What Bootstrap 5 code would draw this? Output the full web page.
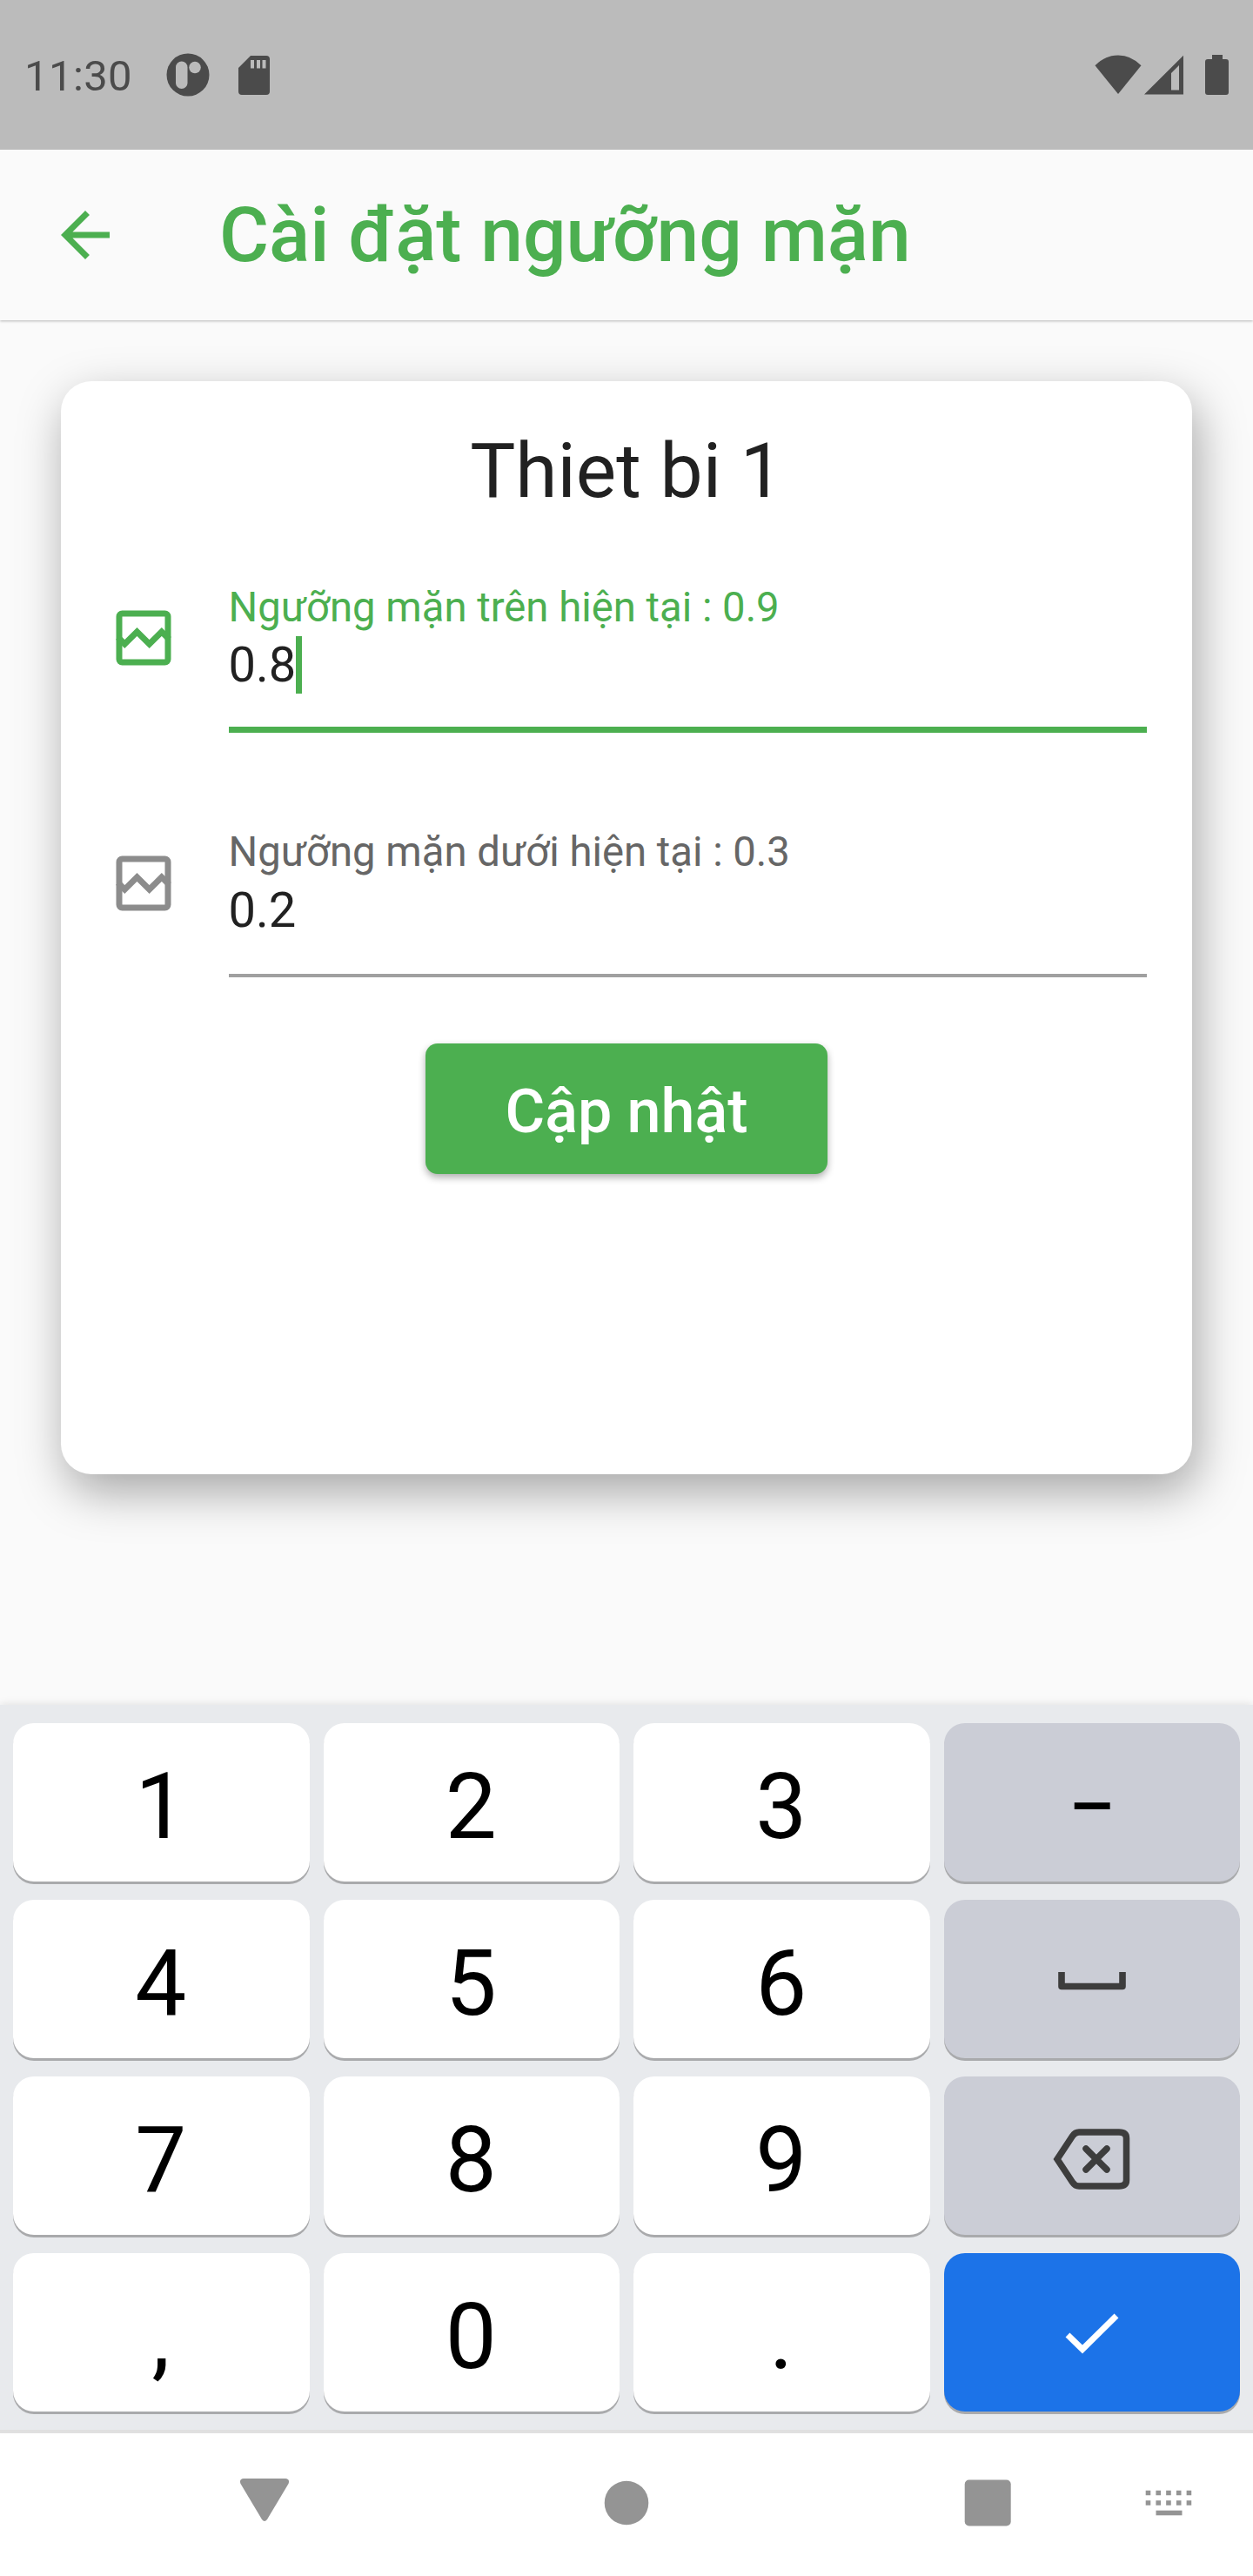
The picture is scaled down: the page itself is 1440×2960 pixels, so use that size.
<!DOCTYPE html>
<html lang="vi">
<head>
<meta charset="utf-8">
<meta name="viewport" content="width=device-width, initial-scale=1">
<title>Cài đặt ngưỡng mặn</title>
<link href="https://cdn.jsdelivr.net/npm/bootstrap@5.3.0/dist/css/bootstrap.min.css" rel="stylesheet">
<style>
  :root { --leaf: #4caf50; --ink: #212121; }
  body { font-family: Roboto, "Noto Sans", sans-serif; background: #fafafa; color: var(--ink); }
  svg { display: block; flex: none; }
  .phone { width: 1440px; height: 2960px; overflow: hidden; }

  .status-bar { height: 172px; background: #bbb; color: #4b4b4b; padding: 4px 28px 0 28px; z-index: 1; }
  .status-bar svg { margin-top: -4px; }
  .clock { font-size: 49px; line-height: 58px; letter-spacing: .4px; width: 163px; }
  .icon-sd { margin-left: 33px; }
  .icon-signal { margin-left: 3px; }
  .icon-battery { margin-left: 25px; }

  .app-bar { height: 196px; padding: 0 56px; background: #fafafa; box-shadow: 0 1px 3px rgba(0,0,0,.27); }
  .app-title { font-size: 87.5px; line-height: 104px; font-weight: 500; color: var(--leaf); margin-left: 112px; }

  .content-area { height: 1591px; padding: 70px 70px 0; }
  .device-card { height: 1256px; border: 0; border-radius: 35px; background: #fff; padding: 51px 52px 0 52px;
    box-shadow: 6px 20px 54px rgba(0,0,0,.34); }
  .device-name { font-size: 87.5px; line-height: 104px; font-weight: 400; margin-bottom: 42px; }

  .field-row { height: 282px; }
  .field-icon { margin: 0 56px 0 .5px; padding-top: 56px; }
  .field-box { height: 172px; border-bottom: 4px solid #a0a0a0; margin-top: 34px; }
  .field-box.is-active { border-bottom: 7px solid var(--leaf); height: 172.5px; margin-top: 34.5px; }
  .field-label { font-size: 47.25px; line-height: 56px; color: #666; }
  .field-value { font-size: 56px; line-height: 66px; margin-top: 5.5px; }
  .is-active .field-label { color: var(--leaf); }
  .caret { width: 7px; height: 66px; background: var(--leaf); }
  .tint-on { color: var(--leaf); } .tint-off { color: #8c8c8c; }

  .btn-update { width: 462px; height: 150px; border: 0; border-radius: 14px; background: var(--leaf); color: #fff;
    font-size: 70px; font-weight: 500; line-height: 82px; padding: 6px 0 0; box-shadow: 0 4px 9px rgba(0,0,0,.32); }

  .keyboard { position: relative; height: 837px; background: #e8eaed; padding: 21px 15px 0; border-bottom: 4px solid #e0e0e0;
    box-shadow: 0 0 10px rgba(0,0,0,.12); }
  .key-grid { display: grid; grid-template-columns: repeat(4, 1fr); grid-auto-rows: 182px; gap: 21px 16px; }
  .key { border: 0; border-radius: 24px; background: #fff; color: #000; font-size: 105px; line-height: 123px; padding: 10px 1px 0 0;
    box-shadow: 0 3px 0 #a9aaac; display: flex; align-items: center; justify-content: center; }
  .key-fn { background: #cbcdd6; color: #3d3d3d; padding: 4px 0 0; }
  .key-dash { color: #000; font-size: 82px; font-weight: 500; padding-top: 10px; }
  .key-erase { padding: 7px 2px 0 0; }
  .key-go { background: #1c73e8; color: #fff; padding: 2px 0 0; }

  .nav-keys { height: 164px; background: #fff; color: #949494; padding-left: 276px; }
  .nav-keys svg { width: 56px; height: 60px; }
  .nav-home { margin-left: 360px; }
  .nav-recent { margin-left: 359px; }
  .nav-ime { margin-left: 152px; }
</style>
</head>
<body>
<div class="phone d-flex flex-column">

  <header class="status-bar position-relative d-flex align-items-center">
    <span class="clock">11:30</span>
    <svg width="50" height="50" viewBox="0 0 50 50"><circle cx="25" cy="25" r="24.5" fill="currentColor"/><rect x="11" y="9.5" width="13.5" height="31.5" rx="6.75" fill="#bbb"/><circle cx="33" cy="16.5" r="6.8" fill="#bbb"/></svg>
    <svg class="icon-sd" width="36" height="45" viewBox="0 0 36 45"><path fill="currentColor" fill-rule="evenodd" d="M14 0H32Q36 0 36 4V41Q36 45 32 45H4Q0 45 0 41V14ZM14 5V14.5H18V5ZM21 5V14.5H25V5ZM27.5 5V14.5H31.5V5Z"/></svg>
    <svg class="ms-auto" width="54" height="46" viewBox="0 0 54 46"><path fill="currentColor" d="M.5 12.3Q12 .5 27 .5T53.5 12.3L27 45Z"/></svg>
    <svg class="icon-signal" width="45" height="46" viewBox="0 0 45 46"><path fill="currentColor" fill-rule="evenodd" d="M0 45.5L45 .8V45.5ZM31 21V40.5H40V12Z"/></svg>
    <svg class="icon-battery" width="27" height="46" viewBox="0 0 27 46"><path fill="currentColor" d="M8 0H20V5H24Q27 5 27 8V43Q27 46 24 46H3Q0 46 0 43V8Q0 5 3 5H8Z"/></svg>
  </header>

  <nav class="app-bar d-flex align-items-center">
    <svg width="84" height="84" viewBox="0 0 24 24" fill="#4caf50"><path d="M20 11H7.83l5.59-5.59L12 4l-8 8 8 8 1.41-1.41L7.83 13H20v-2z"/></svg>
    <h1 class="app-title mb-0">Cài đặt ngưỡng mặn</h1>
  </nav>

  <main class="content-area">
    <section class="card device-card">
      <h2 class="device-name text-center">Thiet bi 1</h2>

      <div class="field-row d-flex">
        <svg class="field-icon tint-on" width="84" height="140" viewBox="0 0 24 24" fill="none" stroke="currentColor" stroke-width="2"><rect x="4" y="4" width="16" height="16" rx="1"/><path d="M3.6 11.8L5.8 14l4.05-4 4.05 4 4.05-4L20.4 12.4"/></svg>
        <div class="field-box is-active flex-grow-1">
          <div class="field-label">Ngưỡng mặn trên hiện tại : 0.9</div>
          <div class="field-value d-flex align-items-center">0.8<span class="caret"></span></div>
        </div>
      </div>

      <div class="field-row d-flex">
        <svg class="field-icon tint-off" width="84" height="140" viewBox="0 0 24 24" fill="none" stroke="currentColor" stroke-width="2"><rect x="4" y="4" width="16" height="16" rx="1"/><path d="M3.6 11.8L5.8 14l4.05-4 4.05 4 4.05-4L20.4 12.4"/></svg>
        <div class="field-box flex-grow-1">
          <div class="field-label">Ngưỡng mặn dưới hiện tại : 0.3</div>
          <div class="field-value">0.2</div>
        </div>
      </div>

      <button type="button" class="btn btn-update align-self-center">Cập nhật</button>
    </section>
  </main>

  <section class="keyboard">
    <div class="key-grid">
      <button class="key">1</button><button class="key">2</button><button class="key">3</button>
      <button class="key key-fn key-dash">–</button>
      <button class="key">4</button><button class="key">5</button><button class="key">6</button>
      <button class="key key-fn" aria-label="Space"><svg width="78" height="22" viewBox="0 0 78 22" fill="none" stroke="currentColor" stroke-width="7.6" stroke-linejoin="round"><path d="M4 1V17.5H74V1"/></svg></button>
      <button class="key">7</button><button class="key">8</button><button class="key">9</button>
      <button class="key key-fn key-erase" aria-label="Backspace"><svg width="90" height="70" viewBox="0 0 90 70" fill="none" stroke="currentColor" stroke-width="7.5"><path d="M6 35L23.5 8.5Q26.5 4 31 4H77Q85.5 4 85.5 11V59Q85.5 66 77 66H31Q26.5 66 23.5 61.5Z"/><path stroke-linecap="round" d="M39 23L63 47M63 23L39 47"/></svg></button>
      <button class="key">,</button><button class="key">0</button><button class="key">.</button>
      <button class="key key-go" aria-label="Done"><svg width="62" height="48" viewBox="0 0 62 48" fill="none" stroke="currentColor" stroke-width="7"><path d="M3 26L20 42.5L59 4"/></svg></button>
    </div>
  </section>

  <footer class="nav-keys position-relative d-flex align-items-center">
    <svg viewBox="0 0 56 60"><path fill="currentColor" d="M4 0H52Q57.5 .5 55.5 6L31 47Q28 51 25 47L.5 6Q-1.5 .5 4 0Z"/></svg>
    <svg class="nav-home" viewBox="0 0 56 60"><circle cx="28" cy="28" r="25.3" fill="currentColor"/></svg>
    <svg class="nav-recent" viewBox="0 0 56 60"><rect x="1.7" y="1.5" width="53" height="53" rx="5" fill="currentColor"/></svg>
    <svg class="nav-ime" viewBox="0 0 56 60"><path stroke="currentColor" stroke-width="5.6" stroke-dasharray="5.6 6.13" d="M1.7 16.5H55M1.7 28H55"/><path stroke="currentColor" stroke-width="5.6" d="M13.5 39.5H43.5"/></svg>
  </footer>
</div>
<script src="https://cdn.jsdelivr.net/npm/bootstrap@5.3.0/dist/js/bootstrap.bundle.min.js"></script>
</body>
</html>
